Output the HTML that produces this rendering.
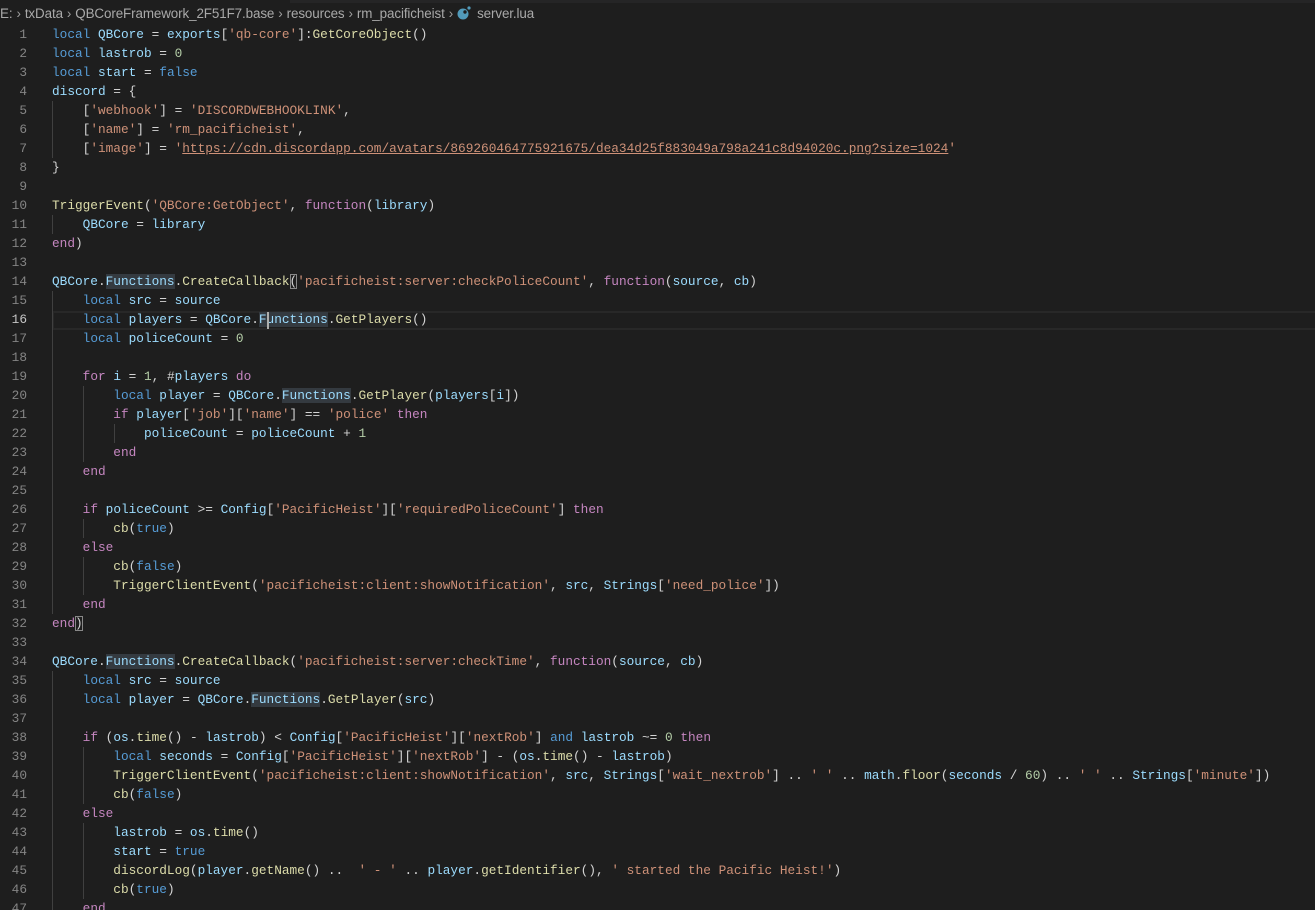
<!DOCTYPE html>
<html><head><meta charset="utf-8">
<style>
html,body{margin:0;padding:0;background:#1e1e1e;width:1315px;height:910px;overflow:hidden;position:relative}
.top{position:absolute;left:290px;top:0;width:1025px;height:3px;background:#252526}
.bc{position:absolute;left:0;top:4px;height:20px;line-height:20px;font-family:"Liberation Sans",sans-serif;font-size:13.4px;color:#a9a9a9;white-space:nowrap;letter-spacing:-0.1px}
.bc .sep{color:#a0a0a0;margin:0 4px}
.ln{position:absolute;left:0;width:27px;text-align:right;font-family:"Liberation Mono",monospace;font-size:12.78px;color:#858585;height:19px;line-height:19px;margin-top:1px}
.ln.a{color:#c6c6c6}
.code{position:absolute;left:52px;top:25px;margin:0;font-family:"Liberation Mono",monospace;font-size:12.78px;line-height:19px;color:#d4d4d4;white-space:pre}
.g{position:absolute;width:1px;background:#404040;margin-top:1px}
.k{color:#569cd6}.c{color:#c586c0}.v{color:#9cdcfe}.f{color:#dcdcaa}.s{color:#ce9178}.n{color:#b5cea8}
.u{text-decoration:underline}
.h{background:#343a40}
.b{outline:1px solid #888;outline-offset:-1px}
.cur{position:absolute;left:52px;top:311px;width:1263px;height:15px;border:2px solid #282828}
.caret{position:absolute;left:267px;top:312px;width:2px;height:17px;background:#aeafad}
</style></head><body>
<div class="top"></div>
<div class="bc">E:<span class="sep">›</span>txData<span class="sep">›</span>QBCoreFramework_2F51F7.base<span class="sep">›</span>resources<span class="sep">›</span>rm_pacificheist<span class="sep">›</span><svg width="14" height="14" viewBox="0 0 14 14" style="vertical-align:-2px;margin-right:6px"><circle cx="6" cy="8" r="5.5" fill="#519aba"/><circle cx="8" cy="6" r="1.7" fill="#1e1e1e"/><circle cx="12" cy="2" r="1.6" fill="#519aba"/></svg>server.lua</div>
<div class="cur"></div>
<div class="g" style="left:52px;top:100px;height:57px"></div>
<div class="g" style="left:52px;top:214px;height:19px"></div>
<div class="g" style="left:52px;top:290px;height:323px"></div>
<div class="g" style="left:52px;top:670px;height:240px"></div>
<div class="g" style="left:83px;top:385px;height:76px"></div>
<div class="g" style="left:83px;top:518px;height:19px"></div>
<div class="g" style="left:83px;top:556px;height:38px"></div>
<div class="g" style="left:83px;top:746px;height:57px"></div>
<div class="g" style="left:83px;top:822px;height:76px"></div>
<div class="g" style="left:114px;top:423px;height:19px"></div>
<pre class="code"><span class="k">local</span> <span class="v">QBCore</span> = <span class="v">exports</span>[<span class="s">'qb-core'</span>]:<span class="f">GetCoreObject</span>()
<span class="k">local</span> <span class="v">lastrob</span> = <span class="n">0</span>
<span class="k">local</span> <span class="v">start</span> = <span class="k">false</span>
<span class="v">discord</span> = {
    [<span class="s">'webhook'</span>] = <span class="s">'DISCORDWEBHOOKLINK'</span>,
    [<span class="s">'name'</span>] = <span class="s">'rm_pacificheist'</span>,
    [<span class="s">'image'</span>] = <span class="s">'<span class="u">https://cdn.discordapp.com/avatars/869260464775921675/dea34d25f883049a798a241c8d94020c.png?size=1024</span>'</span>
}

<span class="f">TriggerEvent</span>(<span class="s">'QBCore:GetObject'</span>, <span class="c">function</span>(<span class="v">library</span>)
    <span class="v">QBCore</span> = <span class="v">library</span>
<span class="c">end</span>)

<span class="v">QBCore</span>.<span class="v h">Functions</span>.<span class="f">CreateCallback</span><span class="b">(</span><span class="s">'pacificheist:server:checkPoliceCount'</span>, <span class="c">function</span>(<span class="v">source</span>, <span class="v">cb</span>)
    <span class="k">local</span> <span class="v">src</span> = <span class="v">source</span>
    <span class="k">local</span> <span class="v">players</span> = <span class="v">QBCore</span>.<span class="v h">Functions</span>.<span class="f">GetPlayers</span>()
    <span class="k">local</span> <span class="v">policeCount</span> = <span class="n">0</span>

    <span class="c">for</span> <span class="v">i</span> = <span class="n">1</span>, #<span class="v">players</span> <span class="c">do</span>
        <span class="k">local</span> <span class="v">player</span> = <span class="v">QBCore</span>.<span class="v h">Functions</span>.<span class="f">GetPlayer</span>(<span class="v">players</span>[<span class="v">i</span>])
        <span class="c">if</span> <span class="v">player</span>[<span class="s">'job'</span>][<span class="s">'name'</span>] == <span class="s">'police'</span> <span class="c">then</span>
            <span class="v">policeCount</span> = <span class="v">policeCount</span> + <span class="n">1</span>
        <span class="c">end</span>
    <span class="c">end</span>

    <span class="c">if</span> <span class="v">policeCount</span> &gt;= <span class="v">Config</span>[<span class="s">'PacificHeist'</span>][<span class="s">'requiredPoliceCount'</span>] <span class="c">then</span>
        <span class="f">cb</span>(<span class="k">true</span>)
    <span class="c">else</span>
        <span class="f">cb</span>(<span class="k">false</span>)
        <span class="f">TriggerClientEvent</span>(<span class="s">'pacificheist:client:showNotification'</span>, <span class="v">src</span>, <span class="v">Strings</span>[<span class="s">'need_police'</span>])
    <span class="c">end</span>
<span class="c">end</span><span class="b">)</span>

<span class="v">QBCore</span>.<span class="v h">Functions</span>.<span class="f">CreateCallback</span>(<span class="s">'pacificheist:server:checkTime'</span>, <span class="c">function</span>(<span class="v">source</span>, <span class="v">cb</span>)
    <span class="k">local</span> <span class="v">src</span> = <span class="v">source</span>
    <span class="k">local</span> <span class="v">player</span> = <span class="v">QBCore</span>.<span class="v h">Functions</span>.<span class="f">GetPlayer</span>(<span class="v">src</span>)

    <span class="c">if</span> (<span class="v">os</span>.<span class="f">time</span>() - <span class="v">lastrob</span>) &lt; <span class="v">Config</span>[<span class="s">'PacificHeist'</span>][<span class="s">'nextRob'</span>] <span class="k">and</span> <span class="v">lastrob</span> ~= <span class="n">0</span> <span class="c">then</span>
        <span class="k">local</span> <span class="v">seconds</span> = <span class="v">Config</span>[<span class="s">'PacificHeist'</span>][<span class="s">'nextRob'</span>] - (<span class="v">os</span>.<span class="f">time</span>() - <span class="v">lastrob</span>)
        <span class="f">TriggerClientEvent</span>(<span class="s">'pacificheist:client:showNotification'</span>, <span class="v">src</span>, <span class="v">Strings</span>[<span class="s">'wait_nextrob'</span>] .. <span class="s">' '</span> .. <span class="v">math</span>.<span class="f">floor</span>(<span class="v">seconds</span> / <span class="n">60</span>) .. <span class="s">' '</span> .. <span class="v">Strings</span>[<span class="s">'minute'</span>])
        <span class="f">cb</span>(<span class="k">false</span>)
    <span class="c">else</span>
        <span class="v">lastrob</span> = <span class="v">os</span>.<span class="f">time</span>()
        <span class="v">start</span> = <span class="k">true</span>
        <span class="f">discordLog</span>(<span class="v">player</span>.<span class="f">getName</span>() ..  <span class="s">' - '</span> .. <span class="v">player</span>.<span class="f">getIdentifier</span>(), <span class="s">' started the Pacific Heist!'</span>)
        <span class="f">cb</span>(<span class="k">true</span>)
    <span class="c">end</span></pre>
<div class="caret"></div>
<div class="ln" style="top:24px">1</div><div class="ln" style="top:43px">2</div><div class="ln" style="top:62px">3</div><div class="ln" style="top:81px">4</div><div class="ln" style="top:100px">5</div><div class="ln" style="top:119px">6</div><div class="ln" style="top:138px">7</div><div class="ln" style="top:157px">8</div><div class="ln" style="top:176px">9</div><div class="ln" style="top:195px">10</div><div class="ln" style="top:214px">11</div><div class="ln" style="top:233px">12</div><div class="ln" style="top:252px">13</div><div class="ln" style="top:271px">14</div><div class="ln" style="top:290px">15</div><div class="ln a" style="top:309px">16</div><div class="ln" style="top:328px">17</div><div class="ln" style="top:347px">18</div><div class="ln" style="top:366px">19</div><div class="ln" style="top:385px">20</div><div class="ln" style="top:404px">21</div><div class="ln" style="top:423px">22</div><div class="ln" style="top:442px">23</div><div class="ln" style="top:461px">24</div><div class="ln" style="top:480px">25</div><div class="ln" style="top:499px">26</div><div class="ln" style="top:518px">27</div><div class="ln" style="top:537px">28</div><div class="ln" style="top:556px">29</div><div class="ln" style="top:575px">30</div><div class="ln" style="top:594px">31</div><div class="ln" style="top:613px">32</div><div class="ln" style="top:632px">33</div><div class="ln" style="top:651px">34</div><div class="ln" style="top:670px">35</div><div class="ln" style="top:689px">36</div><div class="ln" style="top:708px">37</div><div class="ln" style="top:727px">38</div><div class="ln" style="top:746px">39</div><div class="ln" style="top:765px">40</div><div class="ln" style="top:784px">41</div><div class="ln" style="top:803px">42</div><div class="ln" style="top:822px">43</div><div class="ln" style="top:841px">44</div><div class="ln" style="top:860px">45</div><div class="ln" style="top:879px">46</div><div class="ln" style="top:898px">47</div>
</body></html>
